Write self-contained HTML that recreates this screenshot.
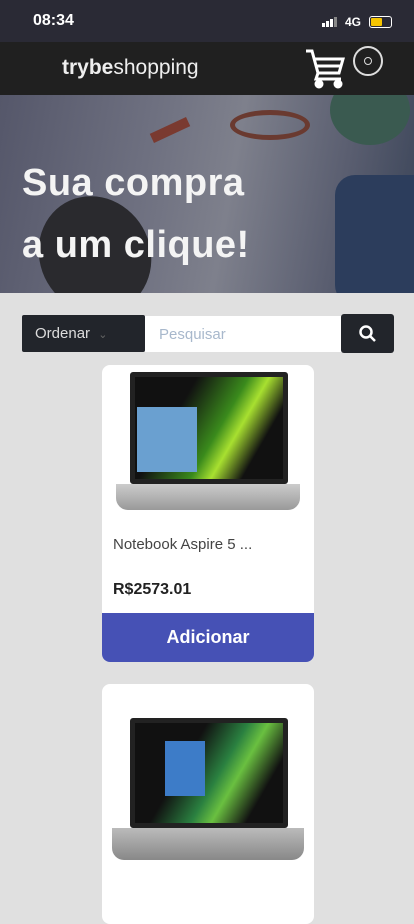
<!DOCTYPE html>
<html><head><meta charset="utf-8"><style>
*{margin:0;padding:0;box-sizing:border-box}
body{width:414px;height:896px;overflow:hidden;background:#e0e0e0;font-family:"Liberation Sans",sans-serif;position:relative}
.status{position:absolute;top:0;left:0;width:414px;height:42px;background:#2a2a35;color:#fff}
.hdr{position:absolute;top:42px;left:0;width:414px;height:53px;background:#202020}
.hero{position:absolute;top:95px;left:0;width:414px;height:198px;background:linear-gradient(100deg,#55576a 0%,#6e7080 35%,#7e808c 55%,#5a5e70 80%,#3a4458 100%);overflow:hidden}
.hero h1{position:absolute;left:22px;top:57px;color:#f4f4f4;font-size:38px;line-height:62px;font-weight:bold;letter-spacing:.5px}
.card{position:absolute;left:102px;width:212px;background:#fff;border-radius:8px;overflow:hidden}
</style></head><body>
<div class="status">
<div style="position:absolute;left:33px;top:12px;font-size:16px;font-weight:bold">08:34</div>
<div style="position:absolute;left:322px;top:17px;width:18px;height:10px">
<span style="position:absolute;left:0;bottom:0;width:3px;height:4px;background:#fff"></span>
<span style="position:absolute;left:4px;bottom:0;width:3px;height:6px;background:#fff"></span>
<span style="position:absolute;left:8px;bottom:0;width:3px;height:8px;background:#fff"></span>
<span style="position:absolute;left:12px;bottom:0;width:3px;height:10px;background:#888"></span></div>
<div style="position:absolute;left:345px;top:15px;font-size:12px;font-weight:bold">4G</div>
<div style="position:absolute;left:369px;top:16px;width:23px;height:12px;border:1.5px solid #fff;border-radius:3px;padding:1px"><div style="width:11px;height:100%;background:#f5c400;border-radius:1px"></div></div>
</div>
<div class="hdr">
<div style="position:absolute;left:62px;top:14px;color:#eee;font-size:21px"><b>trybe</b>shopping</div>
<svg style="position:absolute;left:305px;top:5px" width="40" height="42" viewBox="0 0 40 42" fill="none" stroke="#fff" stroke-width="3"><path d="M1 4h6l6 22h21l4-14H10"/><path d="M12 19h24"/><path d="M13 26l-2 6h25"/><circle cx="14" cy="37" r="3" fill="#fff"/><circle cx="33" cy="37" r="3" fill="#fff"/></svg>
<div style="position:absolute;left:353px;top:4px;width:30px;height:30px;border:2px solid #ddd;border-radius:50%"><div style="position:absolute;left:9px;top:9px;width:8px;height:8px;border:1.5px solid #ddd;border-radius:50%"></div></div>
</div>
<div class="hero">
<div style="position:absolute;left:40px;top:100px;width:110px;height:120px;border-radius:50%;background:#2a2a2e;transform:rotate(-30deg)"></div>
<div style="position:absolute;left:230px;top:15px;width:80px;height:30px;border-radius:50%;border:5px solid #6a3a30"></div>
<div style="position:absolute;left:150px;top:30px;width:40px;height:10px;background:#7a3a30;transform:rotate(-25deg)"></div>
<div style="position:absolute;left:335px;top:80px;width:110px;height:130px;border-radius:20px;background:#2c3d5c"></div>
<div style="position:absolute;left:330px;top:-20px;width:80px;height:70px;border-radius:50%;background:#3a5a50"></div>
<h1>Sua compra<br>a um clique!</h1>
</div>
<div style="position:absolute;left:22px;top:315px;width:123px;height:37px;background:#22252b;border-radius:2px;color:#ddd;font-size:15px;padding:10px 13px">Ordenar <span style="color:#666;font-size:11px;margin-left:4px">⌄</span></div>
<div style="position:absolute;left:145px;top:316px;width:196px;height:36px;background:#fff;color:#a8b8cc;font-size:15px;padding:10px 14px">Pesquisar</div>
<div style="position:absolute;left:341px;top:314px;width:53px;height:39px;background:#22252b;border-radius:3px">
<svg style="position:absolute;left:17px;top:10px" width="20" height="20" viewBox="0 0 20 20" fill="none" stroke="#fff" stroke-width="2.5"><circle cx="8" cy="8" r="5.5"/><path d="M12 12l5 5"/></svg></div>
<div class="card" style="top:365px;height:297px">
<div style="position:absolute;left:28px;top:7px;width:158px;height:112px;background:linear-gradient(120deg,#111 30%,#3a8a1c 55%,#a8e030 65%,#111 80%);border:5px solid #222;border-radius:3px"><div style="position:absolute;left:2px;top:30px;width:60px;height:65px;background:#6aa0d0"></div></div>
<div style="position:absolute;left:14px;top:119px;width:184px;height:26px;background:linear-gradient(#ccc,#999);border-radius:0 0 12px 12px"></div>
<div style="position:absolute;left:11px;top:171px;font-size:15px;color:#444">Notebook Aspire 5 ...</div>
<div style="position:absolute;left:11px;top:216px;font-size:16px;font-weight:bold;color:#222">R$2573.01</div>
<div style="position:absolute;left:0;bottom:0;width:212px;height:49px;background:#4651b5;color:#fff;font-size:18px;font-weight:bold;text-align:center;line-height:49px">Adicionar</div>
</div>
<div class="card" style="top:684px;height:240px">
<div style="position:absolute;left:28px;top:34px;width:158px;height:110px;background:linear-gradient(120deg,#111 35%,#2a8040 55%,#6ac040 65%,#111 82%);border:5px solid #222;border-radius:3px"><div style="position:absolute;left:30px;top:18px;width:40px;height:55px;background:#3d7cc8"></div></div>
<div style="position:absolute;left:10px;top:144px;width:192px;height:32px;background:linear-gradient(#bbb,#888);border-radius:0 0 12px 12px"></div>
</div>
</body></html>
